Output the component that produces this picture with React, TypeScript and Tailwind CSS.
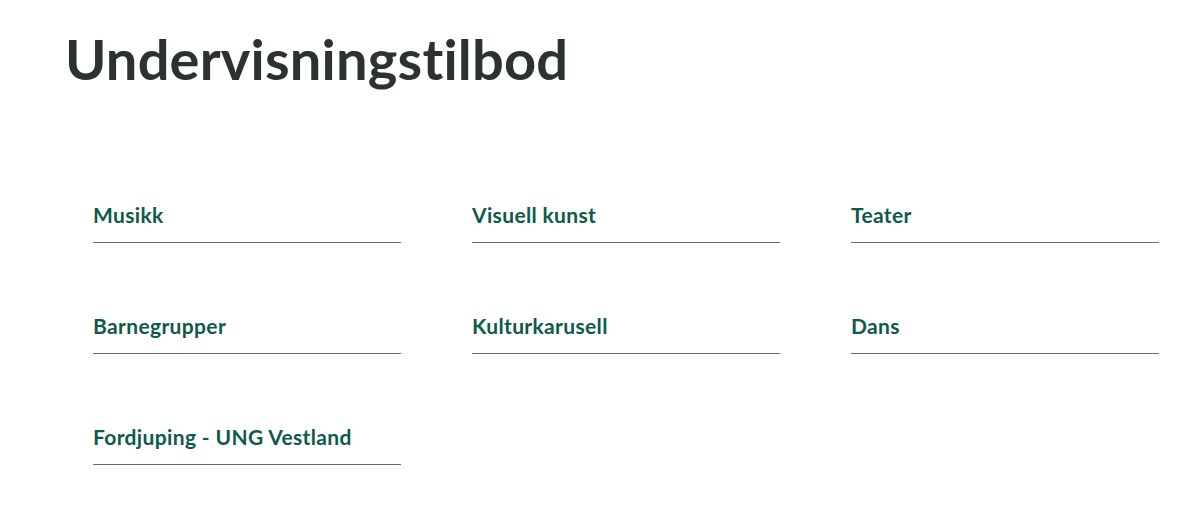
const items = [
  "Musikk",
  "Visuell kunst",
  "Teater",
  "Barnegrupper",
  "Kulturkarusell",
  "Dans",
  "Fordjuping - UNG Vestland",
];

export default function App() {
  return (
    <div className="min-h-[526px] bg-white font-['Lato','Open_Sans',sans-serif]">
      <div className="pl-[65px] pt-[26px]">
        <h1 className="text-[56px] font-bold leading-[66px] tracking-[0.2px] text-[#2b3231]">
          Undervisningstilbod
        </h1>
      </div>
      <div className="mt-[108px] grid grid-cols-[308px_308px_308px] gap-x-[71px] gap-y-[68px] pl-[93px]">
        {items.map((item) => (
          <a
            key={item}
            href="#"
            className="block border-b border-[#6b6b6b] pb-[13px] text-[21px] font-bold leading-[29px] tracking-[0.35px] text-[#0e5a4b]"
          >
            {item}
          </a>
        ))}
      </div>
    </div>
  );
}
